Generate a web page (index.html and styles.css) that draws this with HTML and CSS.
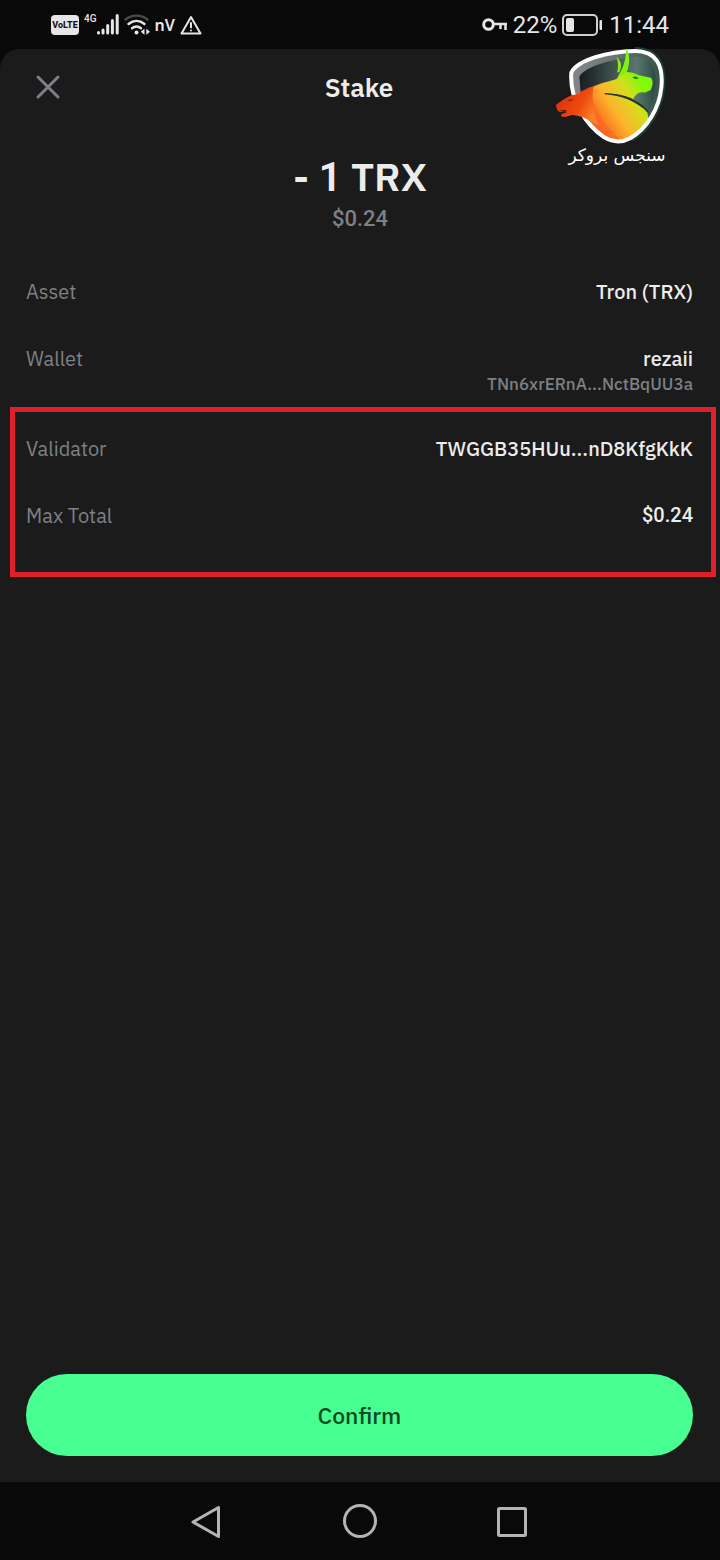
FILE: index.html
```html
<!DOCTYPE html>
<html lang="en">

<head>
    <meta charset="UTF-8">
    <meta name="viewport" content="width=device-width, initial-scale=1.0">
    <title>Stake</title>
    <link rel="stylesheet" href="styles.css">
</head>

<body>
    <div class="status-bar">
        <div class="status-left">
            <span class="volte">VoLTE</span>
            <div class="signal">
                <span class="network">4G</span>
                <svg width="22" height="21" viewBox="0 0 22 21" stroke="#e6e6e6" stroke-width="3" stroke-linecap="round">
                    <path d="M1.5 18.6v.4M6 16v3M10.700 11.500v7.500M15.400 6.500v12.500M20.200 1.500v17.500" />
                </svg>
            </div>
            <svg class="wifi" width="26" height="22" viewBox="0 0 26 22" fill="none" stroke="#e6e6e6" stroke-width="2.400" stroke-linecap="round">
                <path d="M1.500 5.500C8 .3 17 .3 23.500 5.500" stroke="#4a4a4a" />
                <path d="M4.500 10C9.500 5.800 15.500 5.800 20.500 10M8 14.200c3-2.400 6-2.400 9 0" />
                <circle cx="12.500" cy="18.500" r="2" fill="#e6e6e6" stroke="none" />
                <path d="M20.500 14.800v6l-3.800-3zM22.300 14.800v6l3.700-3z" fill="#e6e6e6" stroke="none" />
            </svg>
            <span class="carrier">nV</span>
            <svg class="warning" width="22" height="20" viewBox="0 0 22 20" fill="none" stroke="#e6e6e6" stroke-width="2" stroke-linejoin="round" stroke-linecap="round">
                <path d="M11 2 20.500 18.500h-19zM11 8v4.500" />
                <path d="M11 15.500v.1" />
            </svg>
        </div>
        <div class="status-right">
            <svg width="26" height="14" viewBox="0 0 26 14" fill="none" stroke="#e6e6e6" stroke-width="3">
                <circle cx="6.500" cy="6.500" r="4.800" />
                <path d="M11 6h14M18.500 6v5M23.500 6v6" stroke-width="2.500" />
            </svg>
            <span class="percent">22%</span>
            <svg class="battery" width="42" height="22" viewBox="0 0 42 22">
                <rect x="1" y="1" width="34" height="20" rx="4" fill="none" stroke="#d0d0d0" stroke-width="2" />
                <rect x="4" y="4" width="8" height="14" rx="2" fill="#e6e6e6" />
                <rect x="37.500" y="6" width="2.500" height="10" rx="1" fill="#e6e6e6" />
            </svg>
            <span class="time">11:44</span>
        </div>
    </div>

    <main class="sheet">
        <header class="sheet-header">
            <button class="close-btn" type="button" aria-label="Close">
                <svg width="24" height="24" viewBox="0 0 24 24" stroke="#7d8086" stroke-width="3" stroke-linecap="round">
                    <path d="M2 2l20 20M22 2L2 22" />
                </svg>
            </button>
            <h1>Stake</h1>
        </header>

        <div class="logo">
            <svg width="140" height="105" viewBox="0 0 420 315">
                <defs>
                    <linearGradient id="rim" x1="0" y1="0" x2="1" y2="0">
                        <stop offset="0" stop-color="#85878a" />
                        <stop offset="0.500" stop-color="#667572" />
                        <stop offset="1" stop-color="#33544c" />
                    </linearGradient>
                    <linearGradient id="glass" x1="0" y1="0" x2="1" y2="0">
                        <stop offset="0" stop-color="#1b1e20" />
                        <stop offset="0.150" stop-color="#252c2e" />
                        <stop offset="0.450" stop-color="#41534f" />
                        <stop offset="0.750" stop-color="#5a776f" />
                        <stop offset="1" stop-color="#2c4a43" />
                    </linearGradient>
                    <linearGradient id="animal" gradientUnits="userSpaceOnUse" x1="80" y1="240" x2="310" y2="90">
                        <stop offset="0" stop-color="#f03c0a" />
                        <stop offset="0.250" stop-color="#f8641c" />
                        <stop offset="0.500" stop-color="#fbb52c" />
                        <stop offset="0.730" stop-color="#d4df1c" />
                        <stop offset="0.900" stop-color="#83f808" />
                    </linearGradient>
                    <linearGradient id="bear" x1="0" y1="0" x2="1" y2="0.500">
                        <stop offset="0" stop-color="#d92b08" />
                        <stop offset="0.650" stop-color="#ee4a10" />
                        <stop offset="1" stop-color="#fa8128" />
                    </linearGradient>
                    <clipPath id="shield">
                        <path d="M94 98C112 60 205 34 285 33C348 33 371 75 364 143C358 203 322 266 272 294C245 309 217 306 193 292C137 255 88 177 94 98Z" />
                    </clipPath>
                </defs>
                <path d="M285 33C348 33 371 75 364 143C358 203 322 266 272 294" fill="none" stroke="#1d3b35" stroke-width="24" />
                <path d="M94 98C112 60 205 34 285 33C348 33 371 75 364 143C358 203 322 266 272 294C245 309 217 306 193 292C137 255 88 177 94 98Z" fill="url(#rim)" />
                <g clip-path="url(#shield)">
                    <path d="M118 110C132 82 208 58 285 50C332 50 352 82 346 140C342 190 322 230 290 260H180L124 180Z" fill="url(#glass)" />
                    <path d="M100 168 156 142C180 128 212 124 231 116L240 98C256 78 263 55 259 25C270 45 267 75 260 96C272 96 284 98 296 106L333 113C341 125 338 137 332 150L314 158C298 154 288 161 280 176C294 187 308 198 322 218L345 325H145Z" fill="url(#animal)" />
                    <path d="M151 142C160 212 205 274 260 313L116 310 94 165Z" fill="#ff6026" opacity=".5" />
                    <path d="M194 159C225 160 269 167 295 187C313 198 322 209 329 222C284 180 246 168 194 163Z" fill="#26382c" />
                    <path d="M277 112Q287 106 296 115Q286 120 277 112Z" fill="#247100" />
                </g>
                <path d="M94 98C112 60 205 34 285 33C348 33 371 75 364 143C358 203 322 266 272 294C245 309 217 306 193 292C137 255 88 177 94 98Z" fill="none" stroke="#fff" stroke-width="12" />
                <path d="M48 194 73 177 94 166 116 162 146 143 161 139C154 175 158 215 177 255L154 247C137 233 117 226 96 225L75 231 62 229 66 221 81 217 76 213 60 217 51 209Z" fill="url(#bear)" />
                <path d="M81 182l19-5q-6 9-19 5ZM57 211l24-1-7 7Z" fill="#681b0a" />
                <path d="M230 52C243 62 246 74 240 94L231 98C236 82 235 68 230 52ZM259 25C271 48 269 76 260 97L230 118C246 92 258 65 259 25Z" fill="#83f20a" />
            </svg>
            <span lang="fa" dir="rtl">سنجس بروکر</span>
        </div>

        <section class="amount">
            <p class="amount-crypto">- <span class="figure">1</span> TRX</p>
            <p class="amount-fiat figure">$0.24</p>
        </section>

        <dl class="details">
            <div class="row">
                <dt>Asset</dt>
                <dd>Tron (TRX)</dd>
            </div>
            <div class="row">
                <dt>Wallet</dt>
                <dd>rezaii<small>TNn6xrERnA...NctBqUU3a</small></dd>
            </div>
        </dl>

        <dl class="details highlighted">
            <div class="row">
                <dt>Validator</dt>
                <dd>TWGGB35HUu...nD8KfgKkK</dd>
            </div>
            <div class="row">
                <dt>Max Total</dt>
                <dd class="figure">$0.24</dd>
            </div>
        </dl>

        <button class="confirm-btn" type="button">Confirm</button>
    </main>

    <nav class="nav-bar">
        <button type="button" aria-label="Back">
            <svg width="36" height="36" viewBox="0 0 36 36">
                <path d="M28.500 3.500v29L3 18z" />
            </svg>
        </button>
        <button type="button" aria-label="Home">
            <svg width="36" height="36" viewBox="0 0 36 36">
                <circle cx="18" cy="17" r="15.500" />
            </svg>
        </button>
        <button type="button" aria-label="Recent apps">
            <svg width="36" height="36" viewBox="0 0 36 36">
                <rect x="4.500" y="4.500" width="27" height="27" rx="1" />
            </svg>
        </button>
    </nav>
</body>

</html>
```
FILE: styles.css
```css
* {
    box-sizing: border-box;
}

body {
    display: flex;
    flex-direction: column;
    min-height: 100vh;
    margin: 0;
    background-color: #090909;
    color: #ececec;
    font-family: "IBM Plex Sans", Roboto, sans-serif;
}

button {
    padding: 0;
    border: none;
    background: none;
    font-family: inherit;
    cursor: pointer;
}

svg {
    display: block;
}

h1, p, dl, dd {
    margin: 0;
}

.figure {
    font-family: Roboto, sans-serif;
}

/* status bar */
.status-bar {
    display: flex;
    justify-content: space-between;
    height: 49px;
    padding: 0 51px;
    color: #e6e6e6;
}

.status-left,
.status-right {
    display: flex;
    align-items: center;
    gap: 5px;
}

.volte {
    width: 28px;
    border-radius: 4px;
    background-color: #e6e6e6;
    color: #111111;
    font-family: Roboto, sans-serif;
    font-size: 9px;
    font-weight: 800;
    line-height: 20px;
    text-align: center;
}

.signal {
    display: flex;
}

.network {
    font-family: Roboto, sans-serif;
    font-size: 10px;
    font-weight: 500;
    line-height: 10px;
}

.carrier {
    font-family: "Noto Sans", sans-serif;
    font-size: 16px;
    font-weight: 600;
}

.percent,
.time {
    font-family: Roboto, sans-serif;
    font-size: 24px;
    line-height: 30px;
}

/* sheet */
.sheet {
    position: relative;
    display: flex;
    flex: 1;
    flex-direction: column;
    padding-bottom: 26px;
    border-radius: 20px 20px 0 0;
    background-color: #1b1b1b;
}

.sheet-header {
    display: grid;
    grid-template-columns: 1fr auto 1fr;
    align-items: center;
    height: 76px;
    padding: 0 38px 0 36px;
}

.close-btn {
    width: 24px;
}

h1 {
    font-size: 26px;
    font-weight: 600;
    line-height: 32px;
}

.logo {
    position: absolute;
    top: -9px;
    right: 40px;
    width: 140px;
}

.logo span {
    display: block;
    padding-left: 14px;
    color: #ffffff;
    font-family: "DejaVu Sans", sans-serif;
    font-size: 17px;
    line-height: 20px;
    text-align: center;
}

.amount {
    padding-top: 24px;
    text-align: center;
}

.amount-crypto {
    font-size: 40px;
    font-weight: 600;
    line-height: 54px;
}

.amount-fiat {
    color: #7d8086;
    font-size: 22px;
    font-weight: 500;
    line-height: 28px;
}

.details {
    margin: 25px 27px 0 26px;
}

.row {
    display: flex;
    justify-content: space-between;
    padding: 20px 0;
    font-size: 20px;
    line-height: 27px;
}

dt {
    color: #7d8086;
}

dd {
    font-weight: 500;
    text-align: right;
}

dd small {
    display: block;
    color: #7d8086;
    font-size: 17px;
    line-height: 25px;
}

.highlighted {
    margin: -10px 4px 0 10px;
    padding: 3px 18px 23px 11px;
    border: 5px solid #de2129;
}

.confirm-btn {
    height: 82px;
    margin: auto 27px 0 26px;
    border-radius: 41px;
    background-color: #48ff91;
    color: #0b4a22;
    font-size: 23px;
    font-weight: 500;
}

/* system navigation */
.nav-bar {
    display: flex;
    justify-content: center;
    gap: 116px;
    height: 78px;
    padding-top: 1px;
}

.nav-bar svg {
    fill: none;
    stroke: #b4b4b4;
    stroke-width: 3;
    stroke-linejoin: round;
}
```
